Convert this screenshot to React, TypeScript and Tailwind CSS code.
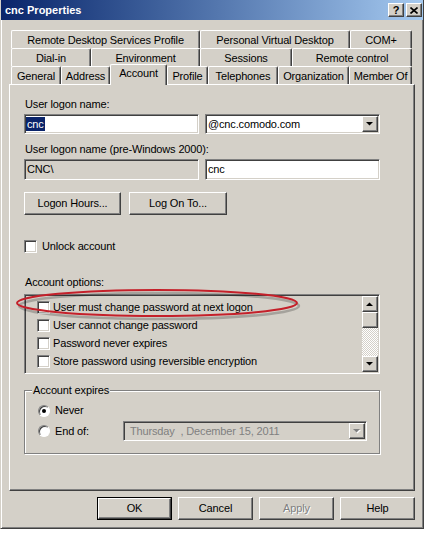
import React from "react";

const raised =
  "border border-t-white border-l-white border-r-[#404040] border-b-[#404040] shadow-[inset_-1px_-1px_#808080] bg-[#d4d0c8]";
const sunken =
  "border border-t-[#808080] border-l-[#808080] border-r-white border-b-white shadow-[inset_1px_1px_#404040,inset_-1px_-1px_#d4d0c8]";

const tabRows: Array<Array<{ label: string; w: string; active?: boolean }>> = [
  [
    { label: "Remote Desktop Services Profile", w: "w-[189px]" },
    { label: "Personal Virtual Desktop", w: "w-[150px]" },
    { label: "COM+", w: "w-[62px]" },
  ],
  [
    { label: "Dial-in", w: "w-[80px]" },
    { label: "Environment", w: "w-[109px]" },
    { label: "Sessions", w: "w-[92px]" },
    { label: "Remote control", w: "w-[120px]" },
  ],
  [
    { label: "General", w: "w-[50px]" },
    { label: "Address", w: "w-[49px]" },
    { label: "Account", w: "w-[57px]", active: true },
    { label: "Profile", w: "w-[41px]" },
    { label: "Telephones", w: "w-[70px]" },
    { label: "Organization", w: "w-[71px]" },
    { label: "Member Of", w: "w-[63px]" },
  ],
];

const accountOptions = [
  "User must change password at next logon",
  "User cannot change password",
  "Password never expires",
  "Store password using reversible encryption",
];

function Tab({ label, w, active }: { label: string; w: string; active?: boolean }) {
  if (active) {
    return (
      <div
        className={`${w} relative top-[1px] z-10 flex h-[21px] items-start justify-center self-end rounded-t-[2px] border-t border-r border-l border-t-white border-r-[#404040] border-l-white bg-[#d4d0c8] pt-[2px] leading-[13px] shadow-[inset_-1px_0_#808080]`}
      >
        {label}
      </div>
    );
  }
  return (
    <div
      className={`${w} flex h-[18px] items-center justify-center rounded-t-[2px] border-t border-r border-l border-t-white border-r-[#404040] border-l-white bg-[#d4d0c8] pt-[1px] leading-[13px] shadow-[inset_-1px_0_#808080]`}
    >
      {label}
    </div>
  );
}

function Checkbox() {
  return <div className={`${sunken} h-[13px] w-[13px] shrink-0 bg-white`} />;
}

function Radio({ checked }: { checked?: boolean }) {
  return (
    <div className="flex h-[12px] w-[12px] shrink-0 items-center justify-center rounded-full border border-t-[#808080] border-r-white border-b-white border-l-[#808080] bg-white shadow-[inset_1px_1px_#404040]">
      {checked && <div className="h-[4px] w-[4px] rounded-full bg-black" />}
    </div>
  );
}

function Arrow({ up, disabled }: { up?: boolean; disabled?: boolean }) {
  const pts = up ? "0,4 3.5,0.5 7,4" : "0,0 7,0 3.5,3.5";
  return (
    <svg width="8" height="5" viewBox="0 0 8 5">
      {disabled && <polygon points={pts} fill="#ffffff" transform="translate(1,1)" />}
      <polygon points={pts} fill={disabled ? "#808080" : "#000000"} />
    </svg>
  );
}

function Scrollbar() {
  return (
    <div className="my-[1px] mr-[1px] flex w-[16px] flex-col">
      <div className={`${raised} flex h-[16px] items-center justify-center`}>
        <Arrow up />
      </div>
      <div className={`${raised} h-[16px]`} />
      <div className="flex-1 bg-[repeating-conic-gradient(#ffffff_0_25%,#d4d0c8_0_50%)] bg-[length:2px_2px]" />
      <div className={`${raised} flex h-[16px] items-center justify-center`}>
        <Arrow />
      </div>
    </div>
  );
}

function DialogButton({ label, disabled, isDefault }: { label: string; disabled?: boolean; isDefault?: boolean }) {
  const text = disabled ? "text-[#808080] [text-shadow:1px_1px_0_#fff]" : "text-black";
  if (isDefault) {
    return (
      <div className="h-[23px] w-[75px] border border-black">
        <div className={`${raised} flex h-full w-full items-center justify-center ${text}`}>{label}</div>
      </div>
    );
  }
  return (
    <div className={`${raised} flex h-[23px] w-[75px] items-center justify-center ${text}`}>{label}</div>
  );
}

export default function App() {
  return (
    <div className="h-[533px] w-[426px] bg-white font-['Liberation_Sans',Arial,sans-serif] text-[11px] tracking-[-0.15px] text-black">
      <div className="flex h-[529px] w-[424px] flex-col border-r border-b border-l border-r-[#404040] border-b-[#404040] border-l-[#d4d0c8] bg-[#d4d0c8] shadow-[inset_1px_0_#fff,inset_-1px_-1px_#808080]">
        {/* title bar */}
        <div className="flex h-[20px] items-center justify-between bg-gradient-to-r from-[#0a246a] to-[#a6caf0] pr-[1px] pl-[4px]">
          <span className="text-[11px] font-bold tracking-normal text-white">cnc Properties</span>
          <div className="flex gap-[2px]">
            <div className={`${raised} flex h-[14px] w-[16px] items-center justify-center text-[11px] leading-none font-bold`}>
              ?
            </div>
            <div className={`${raised} flex h-[14px] w-[16px] items-center justify-center`}>
              <svg width="8" height="7" viewBox="0 0 8 7">
                <path d="M0.5 0.5 L7.5 6.5 M7.5 0.5 L0.5 6.5" stroke="#000" strokeWidth="1.6" />
              </svg>
            </div>
          </div>
        </div>

        <div className="flex flex-col pt-[10px] pl-[8px]">
          {/* tabs */}
          <div className="ml-[2px] flex flex-col">
            {tabRows.map((row, i) => (
              <div key={i} className="flex h-[18px] items-end">
                {row.map((t) => (
                  <Tab key={t.label} {...t} />
                ))}
              </div>
            ))}
          </div>

          {/* tab page */}
          <div className="relative h-[407px] w-[406px] border border-t-white border-r-[#404040] border-b-[#404040] border-l-white shadow-[inset_-1px_-1px_#808080]">
            <div className="flex flex-col pl-[14px] leading-[13px]">
              <div className="mt-[13px] h-[13px] pl-[1px]">User logon name:</div>
              <div className="mt-[3px] flex gap-[6px]">
                <div className={`${sunken} flex h-[20px] w-[175px] items-center bg-white pl-[1px]`}>
                  <span className="bg-[#0a246a] px-[1px] leading-[14px] text-white">cnc</span>
                </div>
                <div className={`${sunken} flex h-[20px] w-[175px] items-center justify-between bg-white pl-[2px]`}>
                  <span>@cnc.comodo.com</span>
                  <div className={`${raised} mr-[1px] flex h-[16px] w-[16px] items-center justify-center`}>
                    <Arrow />
                  </div>
                </div>
              </div>

              <div className="mt-[9px] h-[13px] pl-[1px]">User logon name (pre-Windows 2000):</div>
              <div className="mt-[3px] flex gap-[6px]">
                <div className={`${sunken} flex h-[21px] w-[175px] items-center bg-[#d4d0c8] pl-[2px]`}>CNC\</div>
                <div className={`${sunken} flex h-[21px] w-[175px] items-center bg-white pl-[2px]`}>cnc</div>
              </div>

              <div className="mt-[12px] flex gap-[8px]">
                <div className={`${raised} flex h-[23px] w-[97px] items-center justify-center`}>Logon Hours...</div>
                <div className={`${raised} flex h-[23px] w-[98px] items-center justify-center`}>Log On To...</div>
              </div>

              <div className="mt-[25px] flex h-[13px] items-center gap-[5px]">
                <Checkbox />
                <span>Unlock account</span>
              </div>

              <div className="mt-[23px] h-[13px] pl-[1px]">Account options:</div>
              <div className={`${sunken} mt-[5px] flex h-[80px] w-[356px] bg-[#d4d0c8]`}>
                <div className="flex flex-1 flex-col pt-[3px] pl-[12px]">
                  {accountOptions.map((o) => (
                    <div key={o} className="flex h-[18px] items-center gap-[3px]">
                      <Checkbox />
                      <span>{o}</span>
                    </div>
                  ))}
                </div>
                <Scrollbar />
              </div>

              {/* account expires group */}
              <div className="relative mt-[16px] h-[64px] w-[356px] border border-[#808080] shadow-[inset_1px_1px_#fff,1px_1px_#fff]">
                <span className="absolute -top-[7px] left-[7px] bg-[#d4d0c8] px-[1px]">Account expires</span>
                <div className="flex flex-col pt-[13px] pl-[13px]">
                  <div className="flex h-[13px] items-center gap-[5px]">
                    <Radio checked />
                    <span>Never</span>
                  </div>
                  <div className="mt-[4px] flex h-[20px] items-center gap-[5px]">
                    <Radio />
                    <span className="w-[63px]">End of:</span>
                    <div className={`${sunken} flex h-[20px] w-[244px] items-center justify-between bg-[#d4d0c8] pl-[6px] text-[#808080]`}>
                      <span className="whitespace-pre">Thursday  , December 15, 2011</span>
                      <div className={`${raised} mr-[1px] flex h-[16px] w-[16px] items-center justify-center`}>
                        <Arrow disabled />
                      </div>
                    </div>
                  </div>
                </div>
              </div>
            </div>

            {/* red highlight ring */}
            <svg
              className="pointer-events-none absolute top-[202px] left-[4px]"
              width="292"
              height="36"
              viewBox="0 0 292 36"
            >
              <ellipse cx="145" cy="19" rx="140" ry="13" fill="none" stroke="rgba(0,0,0,0.22)" strokeWidth="2.5" />
              <ellipse cx="143" cy="16" rx="140" ry="13" fill="none" stroke="#c4202a" strokeWidth="2" />
            </svg>
          </div>

          {/* dialog buttons */}
          <div className="mt-[6px] flex w-[406px] justify-end gap-[6px]">
            <DialogButton label="OK" isDefault />
            <DialogButton label="Cancel" />
            <DialogButton label="Apply" disabled />
            <DialogButton label="Help" />
          </div>
        </div>
      </div>
    </div>
  );
}
